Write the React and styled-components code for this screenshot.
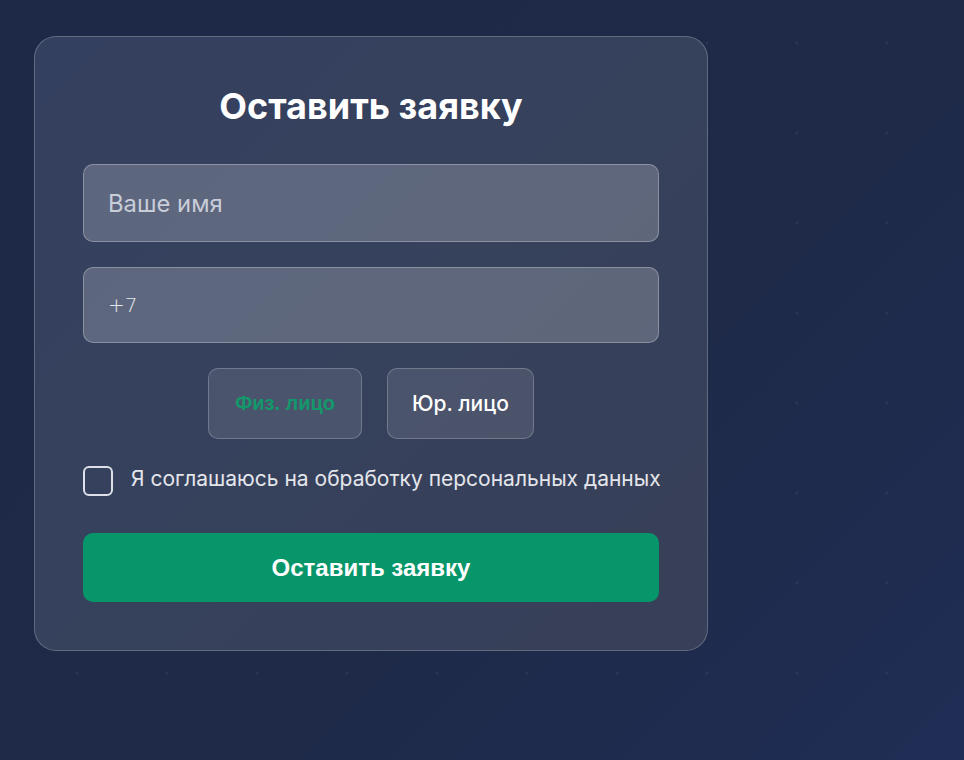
import React, { useState } from "react";
import styled, { createGlobalStyle } from "styled-components";

const GlobalStyle = createGlobalStyle`
  html, body {
    margin: 0;
    padding: 0;
  }
  body {
    font-family: Inter, "Noto Sans", sans-serif;
    background-color: #1e2a47;
    background-image:
      radial-gradient(circle at 45px 45px, rgba(255, 255, 255, 0.05) 1px, transparent 2px),
      linear-gradient(135deg, #1d2946 0%, #1e2a48 60%, #202d55 100%);
    background-size: 90px 90px, 100% 100%;
    background-position: 32px -2px, 0 0;
    min-height: 760px;
  }
`;

const Page = styled.div`
  display: flex;
  align-items: flex-start;
  padding: 36px 34px;
  min-height: 760px;
  box-sizing: border-box;
`;

const Card = styled.form`
  width: 674px;
  box-sizing: border-box;
  padding: 48px;
  border: 1px solid rgba(255, 255, 255, 0.22);
  border-radius: 22px;
  background: linear-gradient(135deg, #34405f 0%, #36415c 50%, #383f58 100%);
  display: flex;
  flex-direction: column;
`;

const Title = styled.h2`
  margin: 0 0 37px;
  text-align: center;
  font-family: Inter, sans-serif;
  font-weight: 700;
  font-size: 36px;
  line-height: 42px;
  color: #ffffff;
`;

const Input = styled.input`
  display: block;
  width: 100%;
  box-sizing: border-box;
  margin-bottom: 25px;
  padding: 0 24px;
  height: ${(p) => p.$h}px;
  border: 1px solid rgba(255, 255, 255, 0.28);
  border-radius: 10px;
  background: rgba(255, 255, 255, 0.2);
  font-family: ${(p) => (p.$mono ? '"DejaVu Sans", sans-serif' : "Inter, sans-serif")};
  font-weight: ${(p) => (p.$mono ? 200 : 400)};
  font-size: ${(p) => (p.$mono ? 20 : 23.8)}px;
  color: #e6e8ef;
  outline: none;

  &::placeholder {
    color: #c9cdd9;
  }
`;

const ToggleRow = styled.div`
  display: flex;
  justify-content: center;
  gap: 25px;
  margin-bottom: 27px;
`;

const Toggle = styled.button`
  height: 71px;
  padding: 0 ${(p) => (p.$active ? 26 : 24)}px;
  border: 1px solid rgba(255, 255, 255, 0.22);
  border-radius: 10px;
  background: rgba(255, 255, 255, 0.1);
  font-family: ${(p) => (p.$active ? '"Liberation Sans", Arial, sans-serif' : "Inter, sans-serif")};
  font-weight: ${(p) => (p.$active ? 700 : 500)};
  font-size: ${(p) => (p.$active ? 20 : 21)}px;
  color: ${(p) => (p.$active ? "#12986b" : "#ffffff")};
  cursor: pointer;
`;

const Agree = styled.label`
  display: flex;
  align-items: flex-start;
  gap: 18px;
  margin-bottom: 37px;
  font-family: Inter, sans-serif;
  font-size: 21px;
  line-height: 25px;
  white-space: nowrap;
  color: #e4e6ec;
  cursor: pointer;
`;

const Box = styled.span`
  width: 30px;
  height: 30px;
  box-sizing: border-box;
  border: 2px solid #dde0e8;
  border-radius: 6px;
  flex-shrink: 0;
`;

const Submit = styled.button`
  height: 69px;
  border: none;
  border-radius: 10px;
  background: #079669;
  font-family: "Liberation Sans", Arial, sans-serif;
  font-weight: 700;
  font-size: 24px;
  color: #ffffff;
  cursor: pointer;
`;

export default function App() {
  const [kind, setKind] = useState("fiz");
  return (
    <>
      <GlobalStyle />
      <Page>
        <Card onSubmit={(e) => e.preventDefault()}>
          <Title>Оставить заявку</Title>
          <Input type="text" placeholder="Ваше имя" $h={78} />
          <Input type="tel" defaultValue="+7" $h={76} $mono />
          <ToggleRow>
            <Toggle type="button" $active={kind === "fiz"} onClick={() => setKind("fiz")}>
              Физ. лицо
            </Toggle>
            <Toggle type="button" $active={kind === "yur"} onClick={() => setKind("yur")}>
              Юр. лицо
            </Toggle>
          </ToggleRow>
          <Agree>
            <Box />
            Я соглашаюсь на обработку персональных данных
          </Agree>
          <Submit type="submit">Оставить заявку</Submit>
        </Card>
      </Page>
    </>
  );
}
